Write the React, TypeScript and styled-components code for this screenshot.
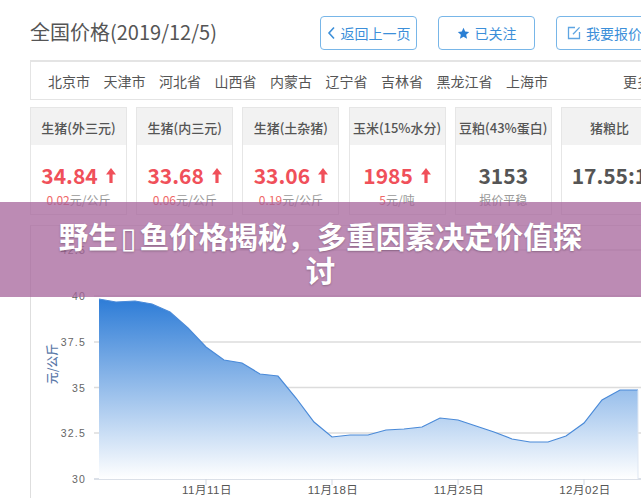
import React from "react";
import styled, { createGlobalStyle } from "styled-components";

const Global = createGlobalStyle`
  html, body { margin: 0; padding: 0; background: #fff; overflow: hidden; }
  body { font-family: "Noto Sans CJK SC", "Noto Sans", sans-serif; }
`;

const Page = styled.div`
  position: relative;
  width: 641px;
  height: 498px;
  overflow: hidden;
`;

const Inner = styled.div`
  width: 640px;
  margin-left: 30px;
  display: flex;
  flex-direction: column;
`;

const Header = styled.div`
  height: 34px;
  margin-top: 16px;
  margin-bottom: 10px;
  display: flex;
  align-items: center;
  padding-right: 17px;
`;

const Title = styled.h1`
  margin: 0 0 2px;
  font-size: 20px;
  font-weight: 400;
  color: #555;
  line-height: 1;
`;

const ButtonGroup = styled.div`
  margin-left: auto;
  display: flex;
  gap: 21px;
`;

const Button = styled.button`
  width: 97px;
  height: 34px;
  box-sizing: border-box;
  border: 1px solid #78b6e8;
  border-radius: 4px;
  background: #fff;
  display: flex;
  align-items: center;
  justify-content: center;
  gap: 5px;
  color: #3c8fd9;
  font-family: "Noto Sans CJK SC", sans-serif;
  font-size: 14px;
  padding: 0;
  flex: none;
`;

const CityBar = styled.div`
  height: 40px;
  box-sizing: border-box;
  border: 1px solid #e4e4e4;
  border-top: 2px solid #e4e4e4;
  display: flex;
  align-items: center;
  padding: 0 18px 0 17px;
  gap: 13.5px;
  font-size: 14px;
  color: #555;
`;

const City = styled.span`
  white-space: nowrap;
`;

const More = styled.span`
  margin-left: auto;
  white-space: nowrap;
`;

const Cards = styled.div`
  display: flex;
  gap: 9.2px;
  margin-top: 7px;
`;

const Card = styled.div`
  width: 97px;
  height: 108px;
  box-sizing: border-box;
  border: 1px solid #e6e6e6;
  flex: none;
  display: flex;
  flex-direction: column;
`;

const CardHead = styled.div`
  height: 37px;
  padding-top: 1px;
  box-sizing: border-box;
  background: #f2f2f2;
  display: flex;
  align-items: center;
  justify-content: center;
  font-size: 13px;
  font-weight: 500;
  color: #555;
  white-space: nowrap;
`;

const CardBody = styled.div`
  display: flex;
  flex-direction: column;
  align-items: center;
  padding-top: 17px;
`;

const Value = styled.div<{ $up?: boolean }>`
  height: 26px;
  display: flex;
  align-items: center;
  gap: 8px;
  font-size: 21px;
  font-weight: 700;
  color: ${(p) => (p.$up ? "#f0505a" : "#555")};
  white-space: nowrap;
`;

const Sub = styled.div`
  margin-top: 4px;
  font-size: 12px;
  line-height: 16px;
  color: #999;
  white-space: nowrap;
`;

const Red = styled.span`
  color: #f06a6a;
`;

const ChartPanel = styled.div`
  margin-top: 10px;
  height: 273px;
  box-sizing: border-box;
  border-left: 1px solid #dedede;
  border-top: 1px solid #e6e6e6;
`;

const ChartSvg = styled.svg`
  display: block;
`;

const Banner = styled.div`
  position: absolute;
  top: 202px;
  left: 0;
  right: 0;
  height: 95px;
  box-sizing: border-box;
  padding: 6px 50px 0;
  background: rgba(165, 100, 155, 0.75);
  display: flex;
  align-items: center;
  justify-content: center;
  text-align: center;
  color: #fff;
  font-size: 29.5px;
  font-weight: 700;
  line-height: 31px;
  text-shadow: 0 1px 2px rgba(0, 0, 0, 0.25);
`;

const Missing = styled.span`
  display: inline-block;
  width: 22px;
  text-align: center;
  font-family: "DejaVu Sans", sans-serif;
  font-weight: 400;
  font-size: 29px;
`;

const UpArrow = () => (
  <svg width="10" height="15" viewBox="0 0 10 15">
    <path d="M5 0 L10 6.5 H6.6 V15 H3.4 V6.5 H0 Z" fill="#f0505a" />
  </svg>
);

const Chevron = () => (
  <svg width="9" height="14" viewBox="0 0 9 14">
    <polyline points="7,1.5 2,7 7,12.5" fill="none" stroke="#3c8fd9" strokeWidth="1.6" />
  </svg>
);

const Star = () => (
  <svg width="13" height="13" viewBox="0 0 24 24">
    <path
      d="M12 1.5l3.1 7 7.4.7-5.6 5 1.7 7.4L12 17.8l-6.6 3.8 1.7-7.4-5.6-5 7.4-.7z"
      fill="#2a7fd4"
    />
  </svg>
);

const EditIcon = () => (
  <svg width="14" height="14" viewBox="0 0 14 14">
    <path d="M8 1.5H1.5v11h11V6" fill="none" stroke="#5ea5e2" strokeWidth="1.3" />
    <path d="M6 8.2L12.6 1.4" fill="none" stroke="#5ea5e2" strokeWidth="1.3" />
  </svg>
);

const cities = ["北京市", "天津市", "河北省", "山西省", "内蒙古", "辽宁省", "吉林省", "黑龙江省", "上海市"];

type CardData = { name: string; value: string; up: boolean; num?: string; unit?: string };
const cards: CardData[] = [
  { name: "生猪(外三元)", value: "34.84", up: true, num: "0.02", unit: "元/公斤" },
  { name: "生猪(内三元)", value: "33.68", up: true, num: "0.06", unit: "元/公斤" },
  { name: "生猪(土杂猪)", value: "33.06", up: true, num: "0.19", unit: "元/公斤" },
  { name: "玉米(15%水分)", value: "1985", up: true, num: "5", unit: "元/吨" },
  { name: "豆粕(43%蛋白)", value: "3153", up: false, unit: "报价平稳" },
  { name: "猪粮比", value: "17.55:1", up: false },
];

const pts: [number, number][] = [
  [99, 299], [116, 302], [135, 301], [152, 304], [170, 312], [188, 328], [206, 347],
  [224, 360], [242, 363], [260, 374], [278, 376], [296, 398], [314, 422], [332, 437],
  [350, 435], [368, 435], [386, 430], [404, 429], [422, 427], [440, 418], [458, 420],
  [476, 426], [494, 432], [512, 439], [530, 442], [548, 442], [566, 436], [584, 423],
  [602, 400], [620, 390], [638, 390],
];

const yTicks = [
  { label: "42.5", y: 250 },
  { label: "40", y: 296 },
  { label: "37.5", y: 342 },
  { label: "35", y: 387.5 },
  { label: "32.5", y: 433 },
  { label: "30", y: 479 },
];

const xTicks = [
  { label: "11月11日", x: 206 },
  { label: "11月18日", x: 332 },
  { label: "11月25日", x: 458 },
  { label: "12月02日", x: 584 },
];

const Chart = () => {
  const line = pts.map((p, i) => `${i ? "L" : "M"}${p[0]} ${p[1]}`).join(" ");
  const area = `${line} L638 479 L99 479 Z`;
  return (
    <ChartSvg width="610" height="272" viewBox="31 226 610 272">
      <defs>
        <linearGradient id="fillg" gradientUnits="userSpaceOnUse" x1="0" y1="296" x2="0" y2="479">
          <stop offset="0" stopColor="#2a7ad6" />
          <stop offset="1" stopColor="#ffffff" />
        </linearGradient>
      </defs>
      {yTicks.map((t) => (
        <g key={t.label}>
          <line x1="94" x2="641" y1={t.y} y2={t.y} stroke={t.label === "30" ? "#cfd6e0" : "#dcdcdc"} strokeWidth="1.4" />
          <text
            x="86"
            y={t.y + 4}
            textAnchor="end"
            fontSize="10.5"
            letterSpacing="1.2"
            fill="#666"
            fontFamily="Liberation Sans, sans-serif"
          >
            {t.label}
          </text>
        </g>
      ))}
      <path d={area} fill="url(#fillg)" />
      <path d={line} fill="none" stroke="#4a8ad8" strokeWidth="1.2" />
      <line x1="638" x2="638" y1="390" y2="479" stroke="#dfe7f2" strokeWidth="1" />
      {xTicks.map((t) => (
        <g key={t.label}>
          <line x1={t.x} x2={t.x} y1="479" y2="485" stroke="#cfd6e0" strokeWidth="1" />
          <text
            x={t.x + 1}
            y="494"
            textAnchor="middle"
            fontSize="11.5"
            fill="#555"
            letterSpacing="0.5"
            fontFamily="Liberation Sans, Noto Sans CJK SC, sans-serif"
          >
            {t.label}
          </text>
        </g>
      ))}
      <text
        x="54"
        y="364"
        transform="rotate(-90 54 364)"
        textAnchor="middle"
        dominantBaseline="middle"
        fontSize="12"
        fontWeight="500"
        fill="#5a78a8"
        fontFamily="Noto Sans CJK SC, sans-serif"
      >
        元/公斤
      </text>
    </ChartSvg>
  );
};

export default function App() {
  return (
    <Page>
      <Global />
      <Inner>
        <Header>
          <Title>全国价格(2019/12/5)</Title>
          <ButtonGroup>
            <Button>
              <Chevron />
              返回上一页
            </Button>
            <Button>
              <Star />
              已关注
            </Button>
            <Button>
              <EditIcon />
              我要报价
            </Button>
          </ButtonGroup>
        </Header>
        <CityBar>
          {cities.map((c) => (
            <City key={c}>{c}</City>
          ))}
          <More>更多</More>
        </CityBar>
        <Cards>
          {cards.map((c) => (
            <Card key={c.name}>
              <CardHead>{c.name}</CardHead>
              <CardBody>
                <Value $up={c.up}>
                  {c.value}
                  {c.up && <UpArrow />}
                </Value>
                {c.unit && (
                  <Sub>
                    {c.num && <Red>{c.num}</Red>}
                    {c.unit}
                  </Sub>
                )}
              </CardBody>
            </Card>
          ))}
        </Cards>
        <ChartPanel>
          <Chart />
        </ChartPanel>
      </Inner>
      <Banner>
        <span>
          野生<Missing>▯</Missing>鱼价格揭秘，多重因素决定价值探讨
        </span>
      </Banner>
    </Page>
  );
}
